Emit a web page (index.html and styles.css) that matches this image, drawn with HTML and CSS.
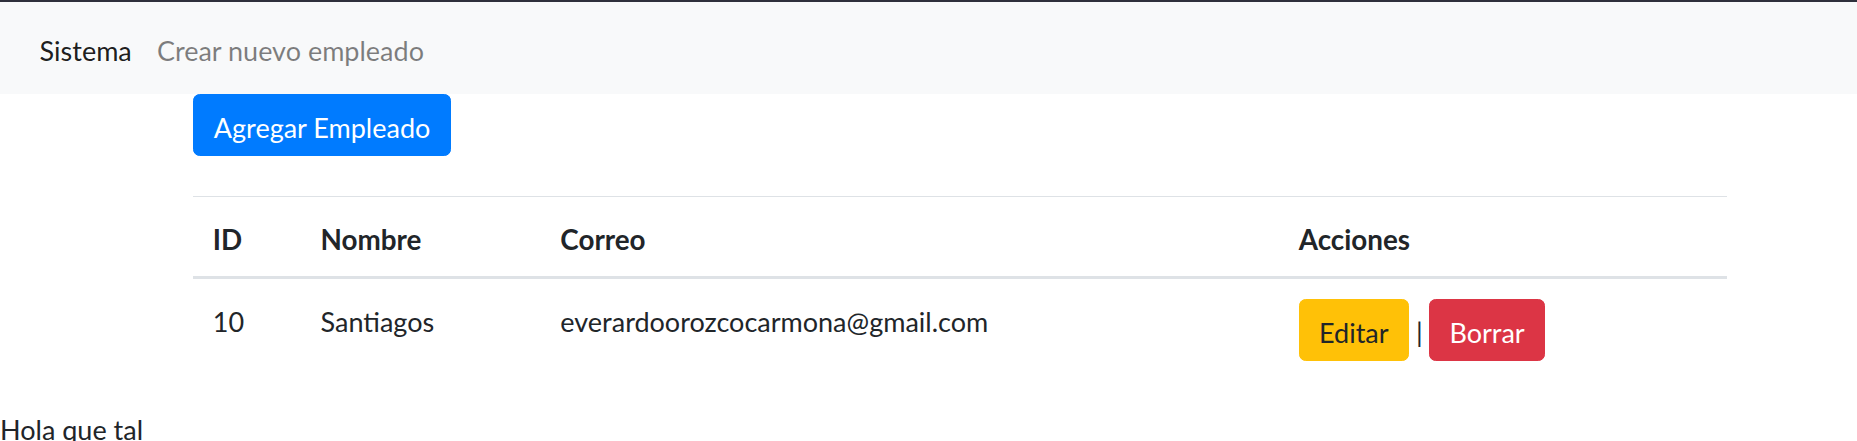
FILE: index.html
```html
<!DOCTYPE html>
<html lang="es">
<head>
<meta charset="utf-8">
<title>Sistema</title>
<link rel="stylesheet" href="styles.css">
</head>
<body>
<div class="topline"></div>
<nav class="navbar">
  <a class="nav-link active" href="#">Sistema</a>
  <a class="nav-link" href="#">Crear nuevo empleado</a>
</nav>
<div class="container">
  <a class="btn btn-primary" href="#">Agregar Empleado</a>
  <div class="spacer"></div>
  <table class="table">
    <thead>
      <tr>
        <th class="col-id">ID</th>
        <th class="col-name">Nombre</th>
        <th class="col-mail">Correo</th>
        <th class="col-actions">Acciones</th>
      </tr>
    </thead>
    <tbody>
      <tr>
        <td>10</td>
        <td>Santiagos</td>
        <td>everardoorozcocarmona@gmail.com</td>
        <td class="cell-actions">
          <div class="actions">
            <a class="btn btn-warning" href="#">Editar</a>
            <span class="sep">|</span>
            <button class="btn btn-danger" type="button">Borrar</button>
          </div>
        </td>
      </tr>
    </tbody>
  </table>
</div>
<p class="footer-text">Hola que tal</p>
</body>
</html>
```
FILE: styles.css
```css
html, body {
  margin: 0;
  padding: 0;
}

body {
  font-family: "Lato", "Noto Sans", sans-serif;
  font-size: 27px;
  line-height: 1.5;
  color: #212529;
  background: #ffffff;
}

.topline {
  height: 2px;
  background: #2e303c;
}

.navbar {
  display: flex;
  align-items: center;
  background: #f8f9fa;
  padding: 13.2px 26.4px;
}

.nav-link {
  display: block;
  padding: 16px 13.2px 10.4px;
  color: rgba(0, 0, 0, 0.5);
  text-decoration: none;
  line-height: 39.6px;
}

.nav-link.active {
  color: rgba(0, 0, 0, 0.9);
  padding-right: 12px;
}

.container {
  width: 1534px;
  margin-left: 193px;
}

.btn {
  display: inline-block;
  box-sizing: border-box;
  font-family: inherit;
  font-size: 27px;
  line-height: 39.6px;
  font-weight: 400;
  padding: 12.7px 19.8px 7.1px;
  border: 1.65px solid transparent;
  border-radius: 6.6px;
  text-decoration: none;
  text-align: center;
  vertical-align: middle;
  cursor: pointer;
}

.btn-primary {
  background: #007bff;
  border-color: #007bff;
  color: #ffffff;
}

.btn-warning {
  background: #ffc107;
  border-color: #ffc107;
  color: #212529;
  padding-left: 19.3px;
  padding-right: 19.3px;
}

.btn-danger {
  background: #dc3545;
  border-color: #dc3545;
  color: #ffffff;
}

.spacer {
  height: 40.5px;
}

.table {
  width: 100%;
  border-collapse: collapse;
  margin-bottom: 26.4px;
  color: #212529;
}

.table th,
.table td {
  padding: 22.8px 19.8px 16.8px;
  border-top: 1.65px solid #dee2e6;
  text-align: left;
  vertical-align: top;
  line-height: 39.6px;
}

.table thead th {
  font-size: 27.8px;
  font-weight: 700;
  vertical-align: bottom;
  border-bottom: 3.3px solid #dee2e6;
}

.table td.cell-actions {
  padding: 19.8px;
}

.col-id { width: 68px; }
.col-name { width: 200px; }
.col-mail { width: 698px; }
.col-actions { width: 408px; }

.actions {
  display: flex;
  align-items: center;
}

.sep {
  padding: 3px 6px 0 7px;
  line-height: 39.6px;
}

.footer-text {
  margin: 0;
  padding: 3px 0 0;
}
```
